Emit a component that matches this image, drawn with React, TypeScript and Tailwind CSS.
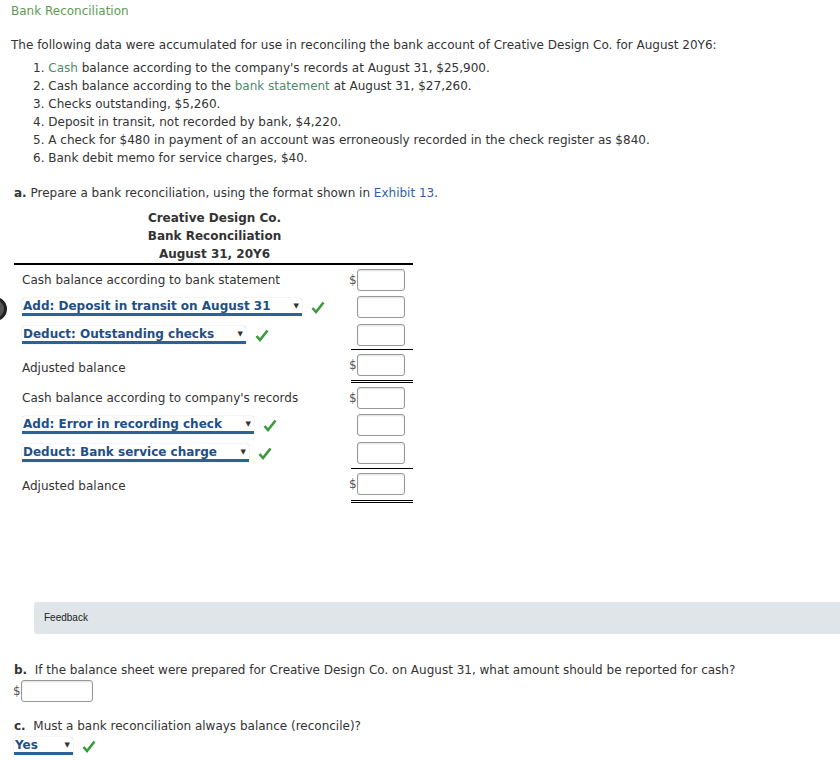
import React from "react";

const Check = () => (
  <svg width="14" height="13" viewBox="0 0 14 13" className="shrink-0">
    <path d="M1.5 7 L5 11 L12.5 1.5" fill="none" stroke="#3b9a3b" strokeWidth="2.6" />
  </svg>
);

const Dropdown = ({ label, w }: { label: string; w: string }) => (
  <div className={`flex items-center justify-between border-b-[3px] border-[#2a6496] rounded-t-[3px] shadow-[0_0_1px_#999] h-[18px] ${w}`}>
    <span className="font-bold text-[#1e4f86] pl-[1px] leading-none">{label}</span>
    <span className="text-[7px] text-[#333] pr-[3px]">▼</span>
  </div>
);

const Box = ({ dollar }: { dollar?: boolean }) => (
  <div className="flex items-center">
    <span className="w-[8px] text-[12px] text-[#555]">{dollar ? "$" : ""}</span>
    <div className="w-[48px] h-[22px] border border-[#999] rounded-[3px] bg-white shadow-[inset_0_1px_2px_#ddd]" />
  </div>
);

const Row = ({ h, children, box, className = "" }: { h: string; children?: React.ReactNode; box: React.ReactNode; className?: string }) => (
  <div className={`flex items-center justify-between ${h} ${className}`}>
    <div className="flex items-center gap-[9px] pl-[8px]">{children}</div>
    <div className="pr-[8px]">{box}</div>
  </div>
);

export default function App() {
  return (
    <div className="relative w-[840px] h-[760px] bg-white text-[#333] text-[12px] leading-[18px] overflow-hidden" style={{ fontFamily: "'DejaVu Sans', Verdana, sans-serif" }}>
      <div className="absolute left-[-17px] top-[297px] w-[24px] h-[24px] rounded-full border-[3px] border-[#222] bg-[#555]" />

      <div className="pl-[11px] pt-[2px] text-[#5f9a55]">Bank Reconciliation</div>

      <p className="pl-[11px] mt-[16px]">
        The following data were accumulated for use in reconciling the bank account of Creative Design Co. for August 20Y6:
      </p>

      <ol className="pl-[33px] mt-[5px]">
        <li>1. <span className="text-[#4f8a6a]">Cash</span> balance according to the company's records at August 31, $25,900.</li>
        <li>2. Cash balance according to the <span className="text-[#4f8a6a]">bank statement</span> at August 31, $27,260.</li>
        <li>3. Checks outstanding, $5,260.</li>
        <li>4. Deposit in transit, not recorded by bank, $4,220.</li>
        <li>5. A check for $480 in payment of an account was erroneously recorded in the check register as $840.</li>
        <li>6. Bank debit memo for service charges, $40.</li>
      </ol>

      <p className="pl-[14px] mt-[17px]">
        <b>a.</b> Prepare a bank reconciliation, using the format shown in <span className="text-[#2f5fa8]">Exhibit 13</span>.
      </p>

      <div className="ml-[14px] w-[399px] mt-[7px]">
        <div className="flex flex-col items-center font-bold pl-[2px]">
          <div>Creative Design Co.</div>
          <div>Bank Reconciliation</div>
          <div>August 31, 20Y6</div>
        </div>
        <div className="border-t-2 border-black" />

        <div className="flex flex-col">
          <Row h="h-[27px]" className="mt-[1px]" box={<Box dollar />}>
            <span>Cash balance according to bank statement</span>
          </Row>
          <Row h="h-[28px]" box={<Box />}>
            <Dropdown label="Add: Deposit in transit on August 31" w="w-[280px]" />
            <Check />
          </Row>
          <Row h="h-[28px]" box={<Box />}>
            <Dropdown label="Deduct: Outstanding checks" w="w-[224px]" />
            <Check />
          </Row>
          <div className="flex justify-end">
            <div className="w-[62px] border-t border-black" />
          </div>
          <Row h="h-[28px]" className="mt-[1px]" box={<Box dollar />}>
            <span className="pt-[5px]">Adjusted balance</span>
          </Row>
          <div className="flex justify-end mt-[1px]">
            <div className="w-[62px] border-y border-black h-[3px]" />
          </div>

          <Row h="h-[27px]" className="mt-[1px]" box={<Box dollar />}>
            <span>Cash balance according to company's records</span>
          </Row>
          <Row h="h-[28px]" box={<Box />}>
            <Dropdown label="Add: Error in recording check" w="w-[232px]" />
            <Check />
          </Row>
          <Row h="h-[28px]" box={<Box />}>
            <Dropdown label="Deduct: Bank service charge" w="w-[227px]" />
            <Check />
          </Row>
          <div className="flex justify-end mt-[1px]">
            <div className="w-[62px] border-t border-black" />
          </div>
          <Row h="h-[28px]" className="mt-[1px]" box={<Box dollar />}>
            <span className="pt-[3px]">Adjusted balance</span>
          </Row>
          <div className="flex justify-end mt-[2px]">
            <div className="w-[62px] border-y border-black h-[3px]" />
          </div>
        </div>
      </div>

      <div className="ml-[34px] mt-[99px] h-[32px] bg-[#dfe5e8] rounded-l-[3px] flex items-center pl-[10px] text-[10px] text-[#222]" style={{ fontFamily: "'Liberation Sans', Arial, sans-serif" }}>
        Feedback
      </div>

      <p className="pl-[14px] mt-[27px]">
        <b>b.</b>&nbsp; If the balance sheet were prepared for Creative Design Co. on August 31, what amount should be reported for cash?
      </p>
      <div className="flex items-center pl-[13px] mt-[1px]">
        <span className="text-[#555]">$</span>
        <div className="w-[72px] h-[22px] border border-[#999] rounded-[3px] shadow-[inset_0_1px_2px_#ddd]" />
      </div>

      <p className="pl-[14px] mt-[15px]">
        <b>c.</b>&nbsp; Must a bank reconciliation always balance (reconcile)?
      </p>
      <div className="flex items-center gap-[9px] pl-[14px] mt-[2px]">
        <Dropdown label="Yes" w="w-[59px]" />
        <Check />
      </div>
    </div>
  );
}
